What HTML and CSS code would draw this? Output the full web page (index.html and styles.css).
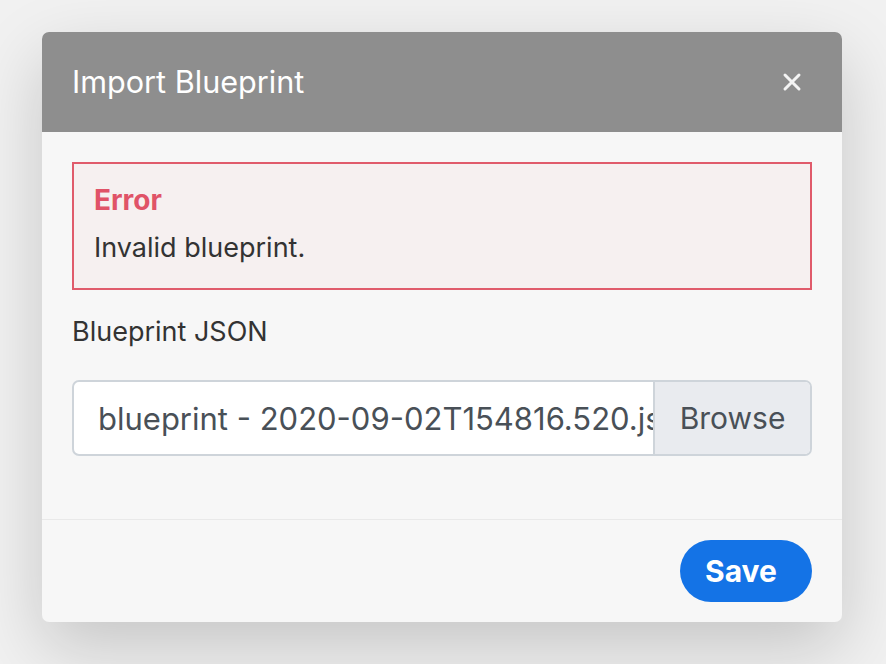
FILE: index.html
```html
<!DOCTYPE html>
<html>
<head>
<meta charset="utf-8">
<link rel="stylesheet" href="styles.css">
</head>
<body>
<div class="modal">
  <div class="modal-header">
    <h1 class="modal-title">Import Blueprint</h1>
    <button class="close" aria-label="Close">
      <svg width="20" height="20" viewBox="0 0 20 20"><path d="M3 3 L17 17 M17 3 L3 17" stroke="#f4f4f4" stroke-width="3" stroke-linecap="round"/></svg>
    </button>
  </div>
  <div class="modal-body">
    <div class="alert">
      <div class="alert-title">Error</div>
      <div class="alert-text">Invalid blueprint.</div>
    </div>
    <label class="label">Blueprint JSON</label>
    <div class="file-input">
      <div class="file-name">blueprint - 2020-09-02T154816.520.json</div>
      <div class="browse">Browse</div>
    </div>
  </div>
  <div class="modal-footer">
    <button class="save">Save</button>
  </div>
</div>
</body>
</html>
```
FILE: styles.css
```css
html, body {
  margin: 0;
  height: 100%;
}
body {
  background: #f1f1f1;
  font-family: Inter, "Noto Sans", sans-serif;
  padding: 32px 0 0 42px;
  box-sizing: border-box;
}
.modal {
  width: 800px;
  background: #f7f7f7;
  border-radius: 7px;
  box-shadow: 0 26px 70px rgba(0,0,0,0.18);
  overflow: hidden;
}
.modal-header {
  height: 100px;
  background: #8e8e8e;
  display: flex;
  align-items: center;
  justify-content: space-between;
  padding: 0 40px 0 30px;
}
.modal-title {
  margin: 0;
  font-size: 30.6px;
  line-height: 36px;
  font-weight: 400;
  color: #ffffff;
}
.close {
  background: none;
  border: 0;
  padding: 0;
  width: 20px;
  height: 20px;
  display: flex;
}
.modal-body {
  padding: 30px 30px 63px;
  border-bottom: 1px solid #e9e9e9;
}
.alert {
  border: 2px solid #e05b6b;
  background: #f6f0f0;
  padding: 22px 20px 0;
  height: 128px;
  box-sizing: border-box;
}
.alert-title {
  color: #e05368;
  font-weight: 700;
  font-size: 28px;
  line-height: 28px;
}
.alert-text {
  color: #333;
  font-size: 27px;
  line-height: 32px;
  margin-top: 18px;
}
.label {
  display: block;
  margin-top: 26px;
  font-size: 27px;
  line-height: 32px;
  color: #333;
}
.file-input {
  margin-top: 32px;
  display: flex;
  height: 76px;
  border: 2px solid #ced4da;
  border-radius: 7px;
  background: #fff;
  box-sizing: border-box;
  overflow: hidden;
}
.file-name {
  flex: 1;
  min-width: 0;
  white-space: nowrap;
  overflow: hidden;
  font-size: 31px;
  color: #495057;
  padding-left: 24px;
  display: flex;
  align-items: center;
}
.browse {
  width: 155px;
  border-left: 2px solid #ced4da;
  background: #e9ebef;
  color: #495057;
  font-size: 30px;
  display: flex;
  align-items: center;
  justify-content: center;
  flex-shrink: 0;
}
.modal-footer {
  display: flex;
  justify-content: flex-end;
  padding: 20px 30px 20px;
}
.save {
  width: 132px;
  height: 62px;
  border: 0;
  border-radius: 31px;
  background: #1473e6;
  color: #fff;
  font-family: Inter, "Noto Sans", sans-serif;
  font-weight: 700;
  font-size: 30px;
  padding: 0 10px 0 0;
}
```
